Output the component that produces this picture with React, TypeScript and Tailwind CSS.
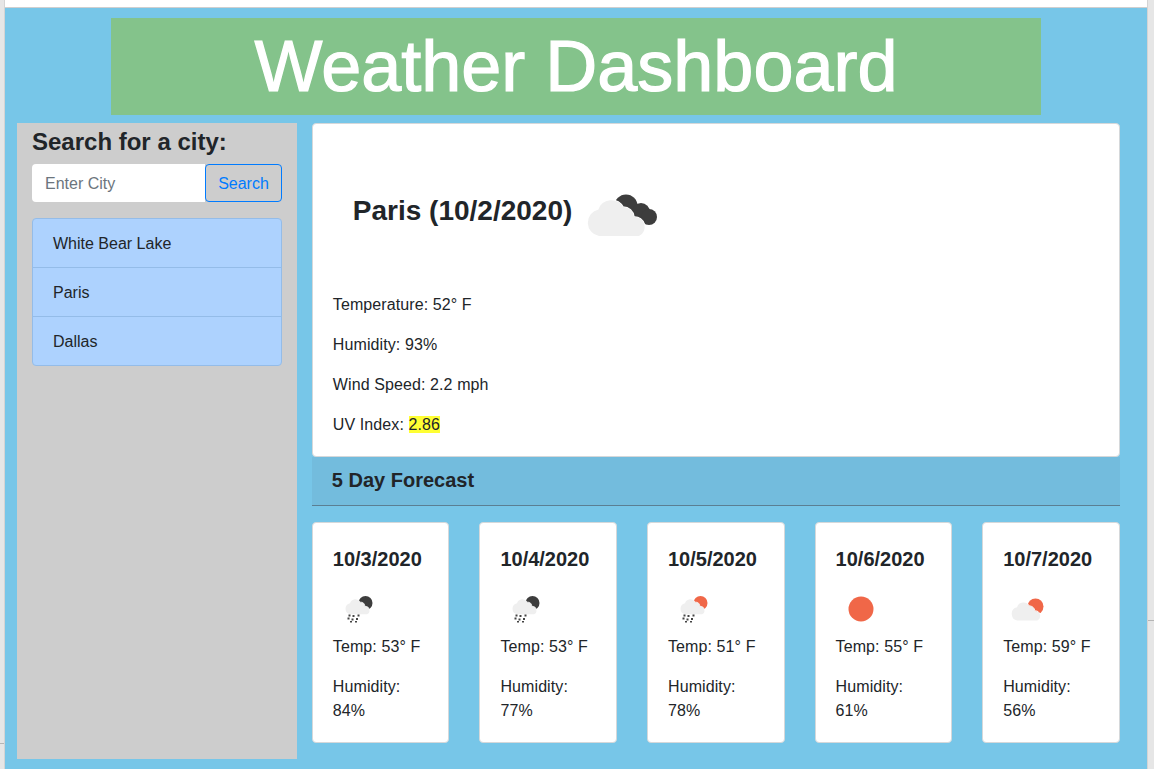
const cloudPath =
  "M31 66A13.5 13.5 0 0 1 30.5 39.5A13.5 13.5 0 0 1 55 37A11 11 0 0 1 66 47A10 10 0 0 1 71 66Z";

const cities = ["White Bear Lake", "Paris", "Dallas"];

type IconKind = "rainDark" | "rainSun" | "sun" | "cloudSun";

const forecast: { date: string; temp: number; humidity: number; icon: IconKind }[] = [
  { date: "10/3/2020", temp: 53, humidity: 84, icon: "rainDark" },
  { date: "10/4/2020", temp: 53, humidity: 77, icon: "rainDark" },
  { date: "10/5/2020", temp: 51, humidity: 78, icon: "rainSun" },
  { date: "10/6/2020", temp: 55, humidity: 61, icon: "sun" },
  { date: "10/7/2020", temp: 59, humidity: 56, icon: "cloudSun" },
];

function MainIcon() {
  return (
    <svg viewBox="15 0 80 80" className="ml-[11px] h-[80px] w-[80px]">
      <circle cx="58" cy="35" r="11.5" fill="#3d3d3d" />
      <circle cx="73" cy="41" r="9" fill="#3d3d3d" />
      <circle cx="81" cy="46" r="8" fill="#3d3d3d" />
      <path
        d={cloudPath}
        transform="translate(0 -1)"
        fill="#efefef"
        stroke="#fff"
        strokeWidth="1.5"
        paintOrder="stroke"
      />
    </svg>
  );
}

function RainDrops() {
  return (
    <g fill="#444">
      <rect x="15.5" y="29.5" width="2" height="2" />
      <rect x="19.5" y="30" width="2" height="2" />
      <rect x="24.5" y="29.5" width="2" height="2" />
      <rect x="14.5" y="32.5" width="2" height="2" />
      <rect x="18.5" y="33.5" width="2" height="2" />
      <rect x="23" y="33" width="2" height="2" />
      <rect x="17" y="36" width="2" height="1.5" />
      <rect x="22" y="36" width="2" height="1.5" />
    </g>
  );
}

function ForecastIcon({ kind }: { kind: IconKind }) {
  return (
    <svg viewBox="0 0 50 50" className="h-[50px] w-[50px]">
      {kind === "sun" && <circle cx="25" cy="24" r="12.5" fill="#f06748" />}
      {(kind === "rainDark" || kind === "rainSun") && (
        <>
          <circle cx="32.5" cy="18" r="7" fill={kind === "rainDark" ? "#3d3d3d" : "#f06748"} />
          <path
            d={cloudPath}
            transform="translate(4.2 1.6) scale(0.42)"
            fill="#efefef"
            stroke="#fff"
            strokeWidth="2"
            paintOrder="stroke"
          />
          <RainDrops />
        </>
      )}
      {kind === "cloudSun" && (
        <>
          <circle cx="32.5" cy="21.5" r="8" fill="#f06748" />
          <path
            d={cloudPath}
            transform="translate(-1.2 2.4) scale(0.5)"
            fill="#efefef"
            stroke="#fff"
            strokeWidth="2"
            paintOrder="stroke"
          />
        </>
      )}
    </svg>
  );
}

export default function App() {
  return (
    <div className="flex h-[769px] w-[1154px] overflow-hidden bg-[#e6e6e6] font-['Liberation_Sans',Arial,sans-serif] text-[16px] text-[#212529]">
      {/* browser edge, left */}
      <div className="w-[5px] shrink-0 border-r border-[#d4d4d4]">
        <div className="mt-[743px] h-px bg-[#b5b5b5]" />
      </div>

      <div className="flex w-[1142px] shrink-0 flex-col">
        <div className="h-[8px] shrink-0 border-b border-[#cfcfcf] bg-white" />

        <div className="flex flex-1 flex-col bg-[#77c6e8] pt-[10px]">
          <header className="mx-auto h-[97px] w-[930px] bg-[#84c38b] text-center text-[72px] leading-[97px] text-white [-webkit-text-stroke:1.2px_white]">
            Weather Dashboard
          </header>

          <div className="mt-[8px] flex pl-[12px]">
            {/* search sidebar */}
            <aside className="h-[636px] w-[280px] bg-[#cdcdcd] px-[15px] pt-[4px]">
              <h2 className="text-[24px] leading-[29px] font-bold">Search for a city:</h2>
              <div className="mt-[8px] flex h-[38px]">
                <div className="flex w-[173px] items-center rounded-l bg-white pt-px pl-[13px] text-[#6c757d]">
                  Enter City
                </div>
                <button className="w-[77px] rounded border border-[#007bff] pt-px text-[#007bff]">Search</button>
              </div>
              <ul className="mt-[16px] overflow-hidden rounded border border-[#94bce8] bg-[#add2fe]">
                {cities.map((city, i) => (
                  <li
                    key={city}
                    className={`flex items-center pt-[2px] pl-[20px] ${i > 0 ? "h-[49px] border-t border-[#94bce8]" : "h-[48px]"}`}
                  >
                    {city}
                  </li>
                ))}
              </ul>
            </aside>

            <main className="ml-[14.8px] w-[808px]">
              {/* current conditions */}
              <section className="h-[334px] rounded border border-[#d5d8da] bg-white px-[20px] pt-[20px]">
                <div className="flex h-[134px] items-center">
                  <h2 className="pl-[20px] text-[28px] leading-[34px] font-bold">Paris (10/2/2020)</h2>
                  <MainIcon />
                </div>
                <div className="mt-[15px] flex flex-col gap-[16px] tracking-[0.1px]">
                  <p>Temperature: 52° F</p>
                  <p>Humidity: 93%</p>
                  <p>Wind Speed: 2.2 mph</p>
                  <p>
                    UV Index: <span className="bg-[#ffff33]">2.86</span>
                  </p>
                </div>
              </section>

              <div className="flex h-[49px] items-center border-b border-[#5b7f93] bg-[#73bcdd] pb-[2px] pl-[20px] text-[20px] font-bold">
                5 Day Forecast
              </div>

              {/* forecast cards */}
              <div className="mt-[16px] flex justify-between">
                {forecast.map((day) => (
                  <article
                    key={day.date}
                    className="h-[221px] w-[137.6px] rounded border border-[#d5d8da] bg-white px-[20px] pt-[24px]"
                  >
                    <h3 className="text-[20px] leading-[24px] font-bold">{day.date}</h3>
                    <div className="mt-[14px]">
                      <ForecastIcon kind={day.icon} />
                    </div>
                    <div className="tracking-[0.1px]">
                      <p>Temp: {day.temp}° F</p>
                      <p className="mt-[16px]">
                        Humidity:
                        <br />
                        {day.humidity}%
                      </p>
                    </div>
                  </article>
                ))}
              </div>
            </main>
          </div>
        </div>
      </div>

      {/* browser edge, right */}
      <div className="w-[7px] shrink-0 border-l border-[#d4d4d4]">
        <div className="mt-[620px] h-px bg-[#b5b5b5]" />
      </div>
    </div>
  );
}
